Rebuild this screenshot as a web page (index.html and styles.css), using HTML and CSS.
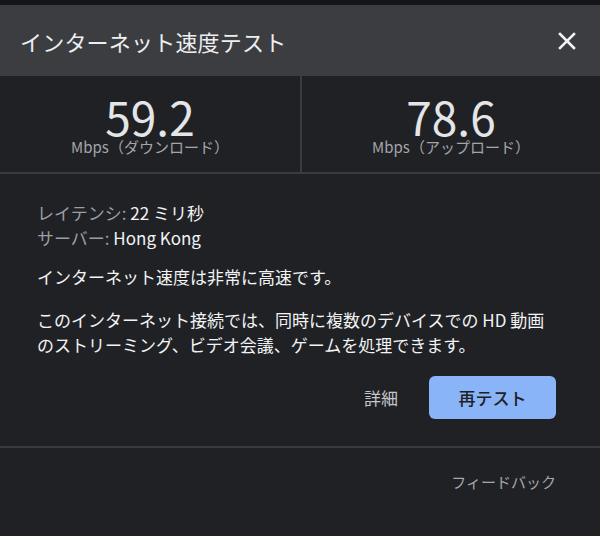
FILE: index.html
```html
<!DOCTYPE html>
<html lang="ja">
<head>
<meta charset="utf-8">
<link rel="stylesheet" href="styles.css">
</head>
<body>
<div class="topbar"></div>
<header class="header">
  <h1 class="title">インターネット速度テスト</h1>
  <button class="close" aria-label="閉じる">
    <svg width="18" height="18" viewBox="0 0 18 18"><path d="M2 2L16 16M16 2L2 16" stroke="#f1f3f4" stroke-width="2.6" stroke-linecap="square"/></svg>
  </button>
</header>
<section class="metrics">
  <div class="metric">
    <div class="value">59.2</div>
    <div class="unit">Mbps（ダウンロード）</div>
  </div>
  <div class="metric">
    <div class="value">78.6</div>
    <div class="unit">Mbps（アップロード）</div>
  </div>
</section>
<section class="content">
  <div class="stats">
    <div><span class="label">レイテンシ:</span> 22 ミリ秒</div>
    <div><span class="label">サーバー:</span> Hong Kong</div>
  </div>
  <p class="para first">インターネット速度は非常に高速です。</p>
  <p class="para">このインターネット接続では、同時に複数のデバイスでの HD 動画のストリーミング、ビデオ会議、ゲームを処理できます。</p>
  <div class="actions">
    <button class="link">詳細</button>
    <button class="primary">再テスト</button>
  </div>
</section>
<footer class="footer">
  <span class="feedback">フィードバック</span>
</footer>
</body>
</html>
```
FILE: styles.css
```css
* { box-sizing: border-box; }
html, body {
  margin: 0;
  padding: 0;
  background: #202125;
  font-family: "Noto Sans CJK JP", "Noto Sans", sans-serif;
  color: #e8eaed;
}
.topbar {
  height: 5px;
  background: #141518;
}
.header {
  height: 71px;
  background: #3c3d41;
  display: flex;
  align-items: center;
  justify-content: space-between;
  padding: 0 24px 0 20px;
}
.title {
  margin: 0;
  font-size: 22px;
  font-weight: 400;
  color: #eceef0;
  letter-spacing: 0.2px;
}
.close {
  background: none;
  border: 0;
  padding: 0;
  width: 18px;
  height: 18px;
  display: flex;
}
.metrics {
  display: grid;
  grid-template-columns: 1fr 1fr;
  height: 98px;
  border-bottom: 2px solid #3a3b3f;
}
.metric {
  display: flex;
  flex-direction: column;
  align-items: center;
  padding-top: 18px;
}
.metric + .metric {
  border-left: 2px solid #3a3b3f;
}
.value {
  font-size: 46px;
  line-height: 44px;
  color: #e3e5e8;
  font-weight: 400;
}
.unit {
  font-size: 15px;
  line-height: 18px;
  color: #a4a6ab;
  margin-top: 0;
}
.content {
  padding: 26px 44px 27px 37px;
  border-bottom: 2px solid #3a3b3f;
}
.stats {
  font-size: 17px;
  line-height: 25px;
  color: #f1f3f4;
}
.label {
  color: #9c9ea3;
}
.para {
  margin: 18px 0 0;
  font-size: 17px;
  line-height: 25px;
  color: #f1f3f4;
}
.para.first {
  margin-top: 14px;
}
.actions {
  display: flex;
  justify-content: flex-end;
  align-items: center;
  gap: 31px;
  margin-top: 19px;
}
.link {
  background: none;
  border: 0;
  padding: 0;
  font-family: inherit;
  font-size: 17px;
  color: #c4c6ca;
}
.primary {
  font-family: inherit;
  width: 127px;
  height: 43px;
  border: 0;
  border-radius: 6px;
  background: #8ab4f8;
  color: #202124;
  font-size: 17px;
  font-weight: 500;
}
.footer {
  display: flex;
  justify-content: flex-end;
  padding: 23px 44px 0 0;
}
.feedback {
  font-size: 15px;
  color: #a4a6ab;
}
```
